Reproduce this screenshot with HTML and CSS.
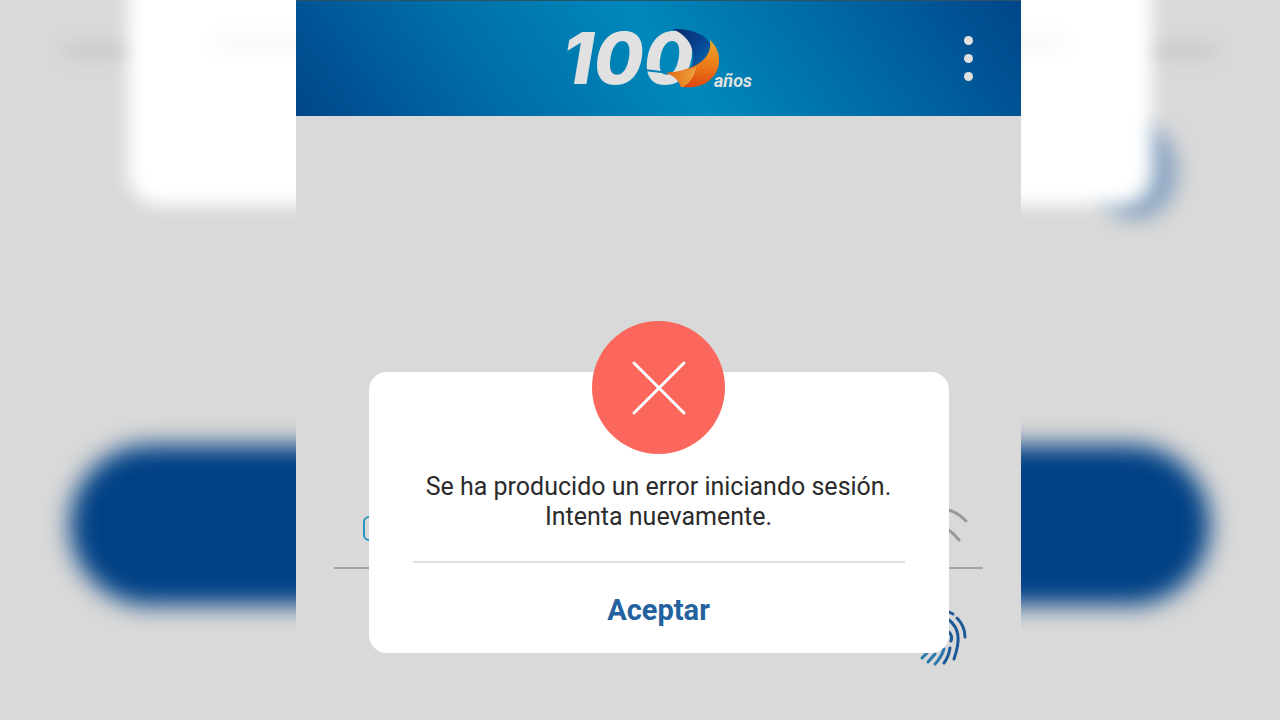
FILE: index.html
```html
<!DOCTYPE html>
<html lang="es">
<head>
    <meta charset="UTF-8">
    <meta name="viewport" content="width=device-width, initial-scale=1.0">
    <title>Iniciar sesión</title>
    <link rel="stylesheet" href="styles.css">
</head>
<body>
    <div class="backdrop" aria-hidden="true">
        <div class="backdrop-field"></div>
        <div class="backdrop-card">
            <div class="backdrop-line"></div>
        </div>
        <div class="backdrop-finger"></div>
        <div class="backdrop-button"></div>
    </div>

    <div class="phone">
        <header class="topbar">
            <svg class="logo" viewBox="0 0 190 64" role="img" aria-label="100 años">
                <defs>
                    <linearGradient id="blue" x1="0" y1="0" x2="1" y2="1">
                        <stop offset="0" stop-color="#0a2c68"/>
                        <stop offset="0.5" stop-color="#07418f"/>
                        <stop offset="1" stop-color="#0873b0"/>
                    </linearGradient>
                    <linearGradient id="orange" x1="0.5" y1="0" x2="0.4" y2="1">
                        <stop offset="0" stop-color="#eda52b"/>
                        <stop offset="0.5" stop-color="#ec7a18"/>
                        <stop offset="1" stop-color="#dd4610"/>
                    </linearGradient>
                    <linearGradient id="amber" x1="0" y1="0" x2="1" y2="0">
                        <stop offset="0" stop-color="#e46a14"/>
                        <stop offset="1" stop-color="#eda13c"/>
                    </linearGradient>
                </defs>
                <text class="logo-number" x="-2" y="57">100</text>
                <path d="M80 43L106 46" stroke="#0080b5" stroke-width="2"/>
                <path d="M109 2C127 1 144 8 147 19C149 29 141 37 127 42C132 29 130 12 109 2z" fill="url(#blue)"/>
                <path d="M102 46C124 44 149 36 146 13C158 24 158 42 147 52C139 60 128 61 117 60C115 54 110 48 102 46z" fill="url(#orange)"/>
                <path d="M102 46C112 45 122 44 132 40C131 48 127 55 119 60L117 60C115 54 110 48 102 46z" fill="url(#amber)"/>
                <text class="logo-years" x="150" y="60">años</text>
            </svg>
            <button class="menu" type="button" aria-label="Menú">
                <span class="dot"></span>
                <span class="dot"></span>
                <span class="dot"></span>
            </button>
        </header>

        <main class="login">
            <div class="field">
                <svg class="user-icon" viewBox="0 0 28 28" aria-hidden="true">
                    <rect x="2" y="2" width="24" height="23" rx="5"/>
                </svg>
                <svg class="eye-icon" viewBox="0 0 56 40" aria-hidden="true">
                    <path d="M4 12C18 -4 38 -4 53 12M11 31C18 13 30 12 46 31"/>
                </svg>
            </div>
            <svg class="fingerprint" viewBox="0 0 60 60" aria-hidden="true">
                <g fill="none" stroke="#1b5a97" stroke-width="3" stroke-linecap="round">
                    <path d="M34 7L44 12"/>
                    <path d="M48 16C54 22 56 28 56 35"/>
                    <path d="M40 18C50 26 52 37 45 57"/>
                    <path d="M40 30C43 33 43 36 42 39"/>
                    <path d="M41 46C40 52 38 57 35 61"/>
                </g>
                <g fill="none" stroke="#2878ab" stroke-width="3" stroke-linecap="round">
                    <path d="M35 47C33 53 30 58 26 62"/>
                    <path d="M26 52L19 60"/>
                    <path d="M18 51L13 56"/>
                </g>
            </svg>
        </main>

        <div class="dialog" role="alertdialog" aria-labelledby="message">
            <svg class="error-icon" viewBox="0 0 133 133" aria-hidden="true">
                <circle cx="66.5" cy="66.5" r="66.5" fill="#fb675c"/>
                <path d="M42 42L92 92M92 42L42 92" stroke="#fff" stroke-width="3" stroke-linecap="round"/>
            </svg>
            <p class="message" id="message">Se ha producido un error iniciando sesión. Intenta nuevamente.</p>
            <button class="accept" type="button">Aceptar</button>
        </div>
    </div>
</body>
</html>
```
FILE: styles.css
```css
:root {
    --background-color: #d9d9d9;
    --primary-color: #004085;
    --link-color: #23629f;
}

* {
    box-sizing: border-box;
}

body {
    margin: 0;
    min-height: 100vh;
    display: grid;
    grid-template-columns: 296fr 725fr 259fr;
    position: relative;
    overflow: hidden;
    font-family: Roboto, Arial, sans-serif;
    background-color: var(--background-color);
    color: #2b2b2b;
}

/* Blurred backdrop behind the phone */
.backdrop {
    position: absolute;
    inset: 0;
    z-index: 0;
    overflow: hidden;
}

.backdrop-card {
    position: relative;
    z-index: 1;
    height: 245px;
    margin: -40px 10% 0;
    padding: 72px 7% 0;
    border-radius: 32px;
    background: white;
    filter: blur(9px);
}

.backdrop-line {
    height: 20px;
    background: #f8f8f8;
}

.backdrop-field {
    position: absolute;
    top: 44px;
    left: 5%;
    right: 5%;
    height: 14px;
    background: #c9c9c9;
    filter: blur(8px);
}

.backdrop-finger {
    position: absolute;
    top: 122px;
    right: 8%;
    width: 84px;
    height: 98px;
    border-radius: 50%;
    background: #8ca6c2;
    filter: blur(10px);
}

.backdrop-button {
    height: 160px;
    margin: 240px 5.5% 0;
    border-radius: 80px;
    background: var(--primary-color);
    filter: blur(12px);
}

.phone {
    grid-column: 2;
    position: relative;
    z-index: 1;
    background: var(--background-color);
}

.topbar {
    display: grid;
    grid-template-columns: 1fr auto 1fr;
    align-items: center;
    height: 116px;
    padding: 0 44px;
    border-top: 1px solid #2c5266;
    background: linear-gradient(55deg, #00458a, #006fa8 28%, #0088ba 51%, #006fa8 70%, #00458a);
}

.logo {
    grid-column: 2;
    width: 190px;
    height: 64px;
    overflow: visible;
}

.logo-number {
    font: italic 800 72px Inter, sans-serif;
    fill: #e1e1e1;
}

.logo-years {
    font: italic 700 18px Roboto, sans-serif;
    fill: #e1e1e1;
}

.menu {
    justify-self: end;
    display: flex;
    flex-direction: column;
    align-items: center;
    gap: 9px;
    width: 18px;
    padding: 0;
    border: none;
    background: none;
    cursor: pointer;
}

.dot {
    width: 9px;
    height: 9px;
    border-radius: 50%;
    background: #e1e1e1;
}

.login {
    display: flex;
    flex-direction: column;
    padding: 388px 38px 0;
}

.field {
    display: flex;
    align-items: center;
    justify-content: space-between;
    height: 65px;
    padding: 0 14px 14px 28px;
    border-bottom: 2px solid #a3a3a3;
}

.user-icon {
    width: 28px;
    height: 28px;
    fill: none;
    stroke: #2795bd;
    stroke-width: 2px;
}

.eye-icon {
    width: 56px;
    height: 40px;
    overflow: visible;
    fill: none;
    stroke: #999;
    stroke-width: 3px;
    stroke-linecap: round;
}

.fingerprint {
    align-self: flex-end;
    width: 60px;
    height: 60px;
    margin: 33px 14px 0 0;
    overflow: visible;
}

.dialog {
    position: absolute;
    top: 372px;
    left: 10%;
    right: 10%;
    display: flex;
    flex-direction: column;
    align-items: center;
    padding: 0 44px;
    border-radius: 18px;
    background: white;
}

.error-icon {
    width: 133px;
    height: 133px;
    margin-top: -51px;
}

.message {
    max-width: 490px;
    margin: 18px 0 29px;
    font-size: 25px;
    line-height: 30px;
    text-align: center;
}

.accept {
    width: 100%;
    height: 92px;
    padding: 4px 0 0;
    border: none;
    border-top: 2px solid #dedede;
    background: none;
    color: var(--link-color);
    font-family: inherit;
    font-size: 29px;
    font-weight: bold;
    cursor: pointer;
}
```
